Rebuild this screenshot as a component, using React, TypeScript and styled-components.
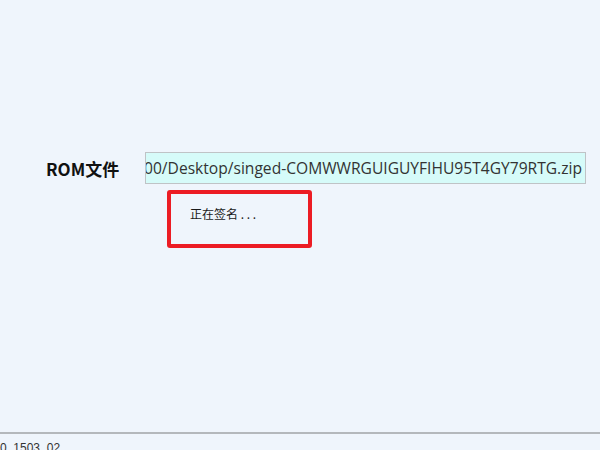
import React from "react";
import styled, { createGlobalStyle } from "styled-components";

const Global = createGlobalStyle`
  html, body { margin: 0; padding: 0; background: #eff5fc; }
  body { font-family: "Noto Sans CJK SC", "Open Sans", sans-serif; overflow: hidden; }
`;

const Page = styled.div`
  height: 450px;
  display: flex;
  flex-direction: column;
  background: #eff5fc;
`;

const Main = styled.div`
  flex: 1;
  padding-top: 152px;
  display: flex;
  flex-direction: column;
`;

const Row = styled.div`
  display: flex;
  align-items: center;
  padding-left: 46px;
`;

const Label = styled.div`
  width: 99px;
  white-space: nowrap;
  font-family: "Noto Sans CJK SC", sans-serif;
  font-weight: 700;
  font-size: 17px;
  color: #111;
`;

const PathBox = styled.div`
  width: 441px;
  height: 32px;
  box-sizing: border-box;
  border: 1px solid #bfc3c6;
  background: #d6fbf9;
  display: flex;
  align-items: center;
  justify-content: flex-end;
  overflow: hidden;
  padding-right: 3px;
`;

const PathText = styled.span`
  white-space: nowrap;
  font-family: "Open Sans", "Noto Sans CJK SC", sans-serif;
  font-size: 15.6px;
  color: #333;
`;

const Status = styled.div`
  margin: 6px 0 0 167px;
  width: 145px;
  height: 58px;
  box-sizing: border-box;
  border: 4px solid #ec1c24;
  border-radius: 3px;
  padding: 11px 0 0 19px;
  font-size: 12px;
  color: #1a1a1a;
`;

const Footer = styled.div`
  height: 18px;
  box-sizing: border-box;
  border-top: 2px solid #b4b8bc;
  padding-top: 8px;
  font-family: "Liberation Sans", sans-serif;
  font-size: 12px;
  line-height: 12px;
  color: #333;
  overflow: hidden;
`;

export default function App() {
  return (
    <>
      <Global />
      <Page>
        <Main>
          <Row>
            <Label>ROM文件</Label>
            <PathBox>
              <PathText>C:/Users/1000/Desktop/singed-COMWWRGUIGUYFIHU95T4GY79RTG.zip</PathText>
            </PathBox>
          </Row>
          <Status>正在签名 . . .</Status>
        </Main>
        <Footer>0_1503_02</Footer>
      </Page>
    </>
  );
}
